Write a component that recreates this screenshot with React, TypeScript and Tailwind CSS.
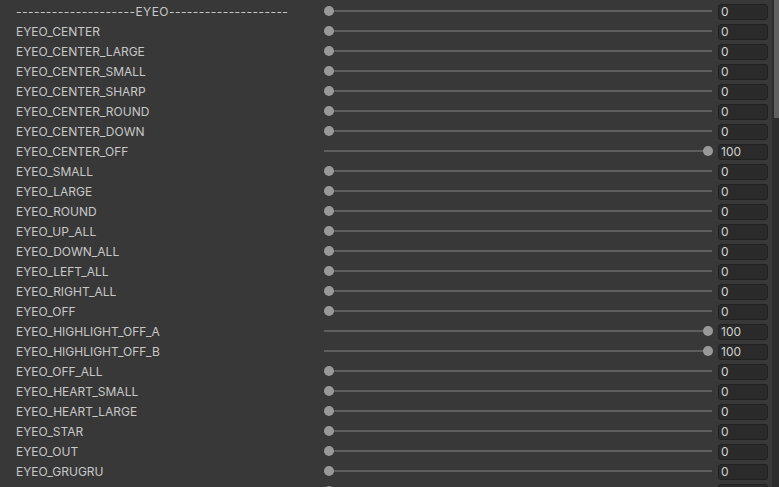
const ROWS: [string, number | null][] = [
  ["--------------------EYEO--------------------", 0],
  ["EYEO_CENTER", 0],
  ["EYEO_CENTER_LARGE", 0],
  ["EYEO_CENTER_SMALL", 0],
  ["EYEO_CENTER_SHARP", 0],
  ["EYEO_CENTER_ROUND", 0],
  ["EYEO_CENTER_DOWN", 0],
  ["EYEO_CENTER_OFF", 100],
  ["EYEO_SMALL", 0],
  ["EYEO_LARGE", 0],
  ["EYEO_ROUND", 0],
  ["EYEO_UP_ALL", 0],
  ["EYEO_DOWN_ALL", 0],
  ["EYEO_LEFT_ALL", 0],
  ["EYEO_RIGHT_ALL", 0],
  ["EYEO_OFF", 0],
  ["EYEO_HIGHLIGHT_OFF_A", 100],
  ["EYEO_HIGHLIGHT_OFF_B", 100],
  ["EYEO_OFF_ALL", 0],
  ["EYEO_HEART_SMALL", 0],
  ["EYEO_HEART_LARGE", 0],
  ["EYEO_STAR", 0],
  ["EYEO_OUT", 0],
  ["EYEO_GRUGRU", 0],
  ["", null],
];

function Slider({ value }: { value: number }) {
  return (
    <div className="relative flex h-full flex-1 items-center pb-[2px]">
      <div className="h-[2px] w-full bg-[#5e5e5e]" />
      <div
        className="absolute top-[4px] h-[10px] w-[10px] rounded-full bg-[#999999]"
        style={{ left: `calc(${value / 100} * (100% - 9px))` }}
      />
    </div>
  );
}

export default function App() {
  return (
    <div
      className="flex h-[487px] w-[779px] overflow-hidden bg-[#383838] text-[12px] text-[#c8c8c8]"
      style={{ fontFamily: "Inter, 'Liberation Sans', sans-serif" }}
    >
      <div className="flex flex-1 flex-col pt-[2px]">
        {ROWS.map(([name, value], i) => (
          <div key={i} className="flex h-[20px] shrink-0 items-center pl-[16px] pr-[4px]">
            <div
              className={
                i === 0
                  ? "w-[308px] shrink-0 whitespace-nowrap leading-none tracking-[0.45px]"
                  : "w-[308px] shrink-0 whitespace-nowrap leading-none"
              }
            >
              {name}
            </div>
            <Slider value={value ?? 0} />
            <div className="ml-[6px] flex h-[16px] w-[50px] shrink-0 items-center rounded-[3px] border border-[#212121] bg-[#2a2a2a] pl-[2px] leading-none text-[#d2d2d2]">
              {value}
            </div>
          </div>
        ))}
      </div>
      <div className="flex w-[7px] shrink-0 bg-[#2c2c2c]">
        <div className="ml-[2px] h-[118px] flex-1 bg-[#5f5f5f]" />
      </div>
    </div>
  );
}
